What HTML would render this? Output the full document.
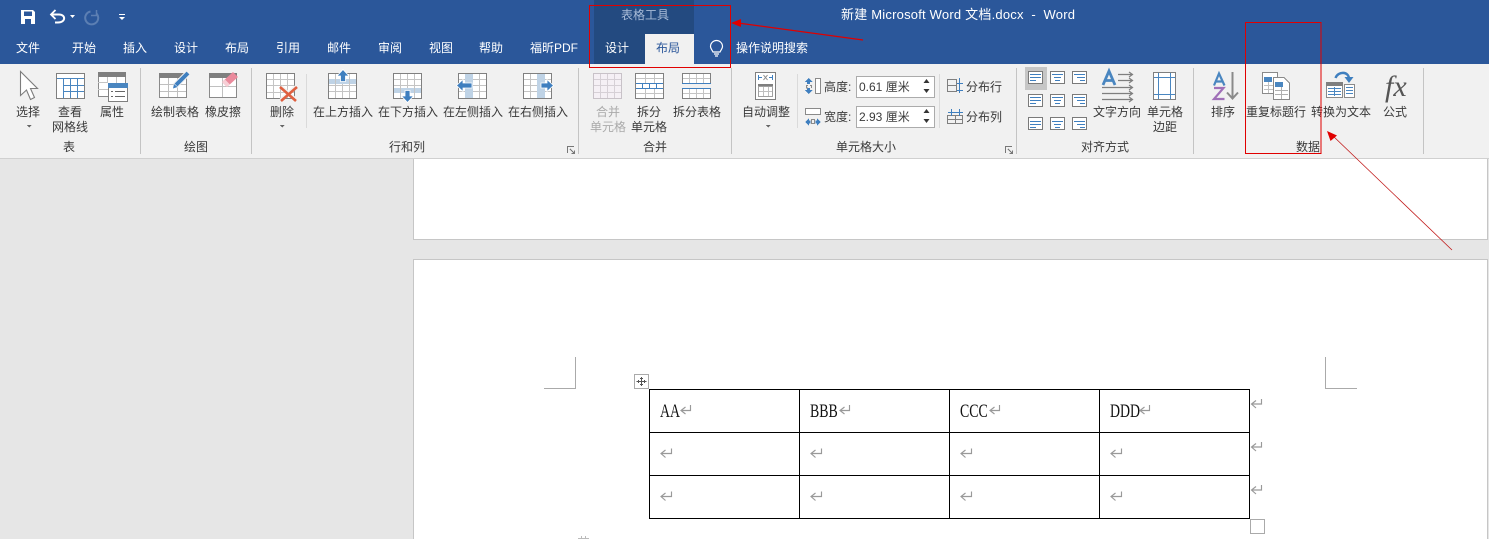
<!DOCTYPE html>
<html lang="zh-CN">
<head>
<meta charset="utf-8">
<title>Word</title>
<style>
html,body{margin:0;padding:0;background:#e6e6e6;width:1489px;height:539px;overflow:hidden}
body{position:relative;font-family:"Liberation Sans","Noto Sans CJK SC",sans-serif;font-size:12px;color:#3a3a3a}
.b{position:absolute}
.t{position:absolute;white-space:nowrap;line-height:16px;transform:translateX(-50%);text-align:center}
.l{position:absolute;white-space:nowrap;line-height:16px}
.w{color:#fff}
.d{font-family:"Liberation Serif",serif;font-size:19px;line-height:20px;color:#111;position:absolute;transform:scaleX(.73);transform-origin:0 0;white-space:nowrap}
svg{position:absolute;left:0;top:0}
</style>
</head>
<body>
<div class="b" style="left:0;top:0;width:1489px;height:64px;background:#2b579a"></div>
<div class="b" style="left:594px;top:0;width:100px;height:64px;background:#234a80"></div>
<div class="b" style="left:0;top:64px;width:1489px;height:94px;background:#f1f1f1"></div>
<div class="b" style="left:0;top:158px;width:1489px;height:1px;background:#d0d0d0"></div>
<div class="b" style="left:645px;top:34px;width:49px;height:30px;background:#f1f1f1"></div>
<div class="b" style="left:413px;top:159px;width:1073px;height:80px;background:#fff;border:1px solid #c6c6c6;border-top:0"></div>
<div class="b" style="left:413px;top:259px;width:1073px;height:280px;background:#fff;border:1px solid #c6c6c6;border-bottom:0"></div>
<div class="b" style="left:1025px;top:67px;width:22px;height:23px;background:#c6c6c6"></div>
<div class="b" style="left:856px;top:76px;width:77px;height:20px;background:#fff;border:1px solid #ababab"></div>
<div class="b" style="left:856px;top:106px;width:77px;height:20px;background:#fff;border:1px solid #ababab"></div>

<!-- tab labels -->
<span class="t w" style="left:28px;top:40px">文件</span>
<span class="t w" style="left:84px;top:40px">开始</span>
<span class="t w" style="left:135px;top:40px">插入</span>
<span class="t w" style="left:186px;top:40px">设计</span>
<span class="t w" style="left:237px;top:40px">布局</span>
<span class="t w" style="left:288px;top:40px">引用</span>
<span class="t w" style="left:339px;top:40px">邮件</span>
<span class="t w" style="left:390px;top:40px">审阅</span>
<span class="t w" style="left:441px;top:40px">视图</span>
<span class="t w" style="left:491px;top:40px">帮助</span>
<span class="t w" style="left:554px;top:40px">福昕PDF</span>
<span class="t w" style="left:617px;top:40px">设计</span>
<span class="t" style="left:668px;top:40px;color:#2b579a">布局</span>
<span class="t w" style="left:772px;top:40px">操作说明搜索</span>
<span class="t" style="left:645px;top:7px;color:#a9bcd8">表格工具</span>
<span class="l w" style="left:841px;top:7px;font-size:13px;letter-spacing:.21px;white-space:pre">新建 Microsoft Word 文档.docx  -  Word</span>

<!-- ribbon labels -->
<span class="t" style="left:28px;top:104px">选择</span>
<span class="t" style="left:70px;top:104px">查看</span>
<span class="t" style="left:70px;top:119px">网格线</span>
<span class="t" style="left:112px;top:104px">属性</span>
<span class="t" style="left:175px;top:104px">绘制表格</span>
<span class="t" style="left:223px;top:104px">橡皮擦</span>
<span class="t" style="left:282px;top:104px">删除</span>
<span class="t" style="left:343px;top:104px">在上方插入</span>
<span class="t" style="left:408px;top:104px">在下方插入</span>
<span class="t" style="left:473px;top:104px">在左侧插入</span>
<span class="t" style="left:538px;top:104px">在右侧插入</span>
<span class="t" style="left:608px;top:104px;color:#aaa">合并</span>
<span class="t" style="left:608px;top:119px;color:#aaa">单元格</span>
<span class="t" style="left:649px;top:104px">拆分</span>
<span class="t" style="left:649px;top:119px">单元格</span>
<span class="t" style="left:697px;top:104px">拆分表格</span>
<span class="t" style="left:766px;top:104px">自动调整</span>
<span class="l" style="left:824px;top:79px">高度:</span>
<span class="l" style="left:824px;top:109px">宽度:</span>
<span class="l" style="left:859px;top:79px;white-space:pre">0.61 厘米</span>
<span class="l" style="left:859px;top:109px;white-space:pre">2.93 厘米</span>
<span class="l" style="left:966px;top:79px">分布行</span>
<span class="l" style="left:966px;top:109px">分布列</span>
<span class="t" style="left:1117px;top:104px">文字方向</span>
<span class="t" style="left:1165px;top:104px">单元格</span>
<span class="t" style="left:1165px;top:119px">边距</span>
<span class="t" style="left:1223px;top:104px">排序</span>
<span class="t" style="left:1276px;top:104px">重复标题行</span>
<span class="t" style="left:1341px;top:104px">转换为文本</span>
<span class="t" style="left:1395px;top:104px">公式</span>
<span class="l" style="left:1385px;top:75px;font-family:'Liberation Serif',serif;font-style:italic;font-size:30px;line-height:24px;color:#555">fx</span>

<!-- group labels -->
<span class="t" style="left:69px;top:139px">表</span>
<span class="t" style="left:196px;top:139px">绘图</span>
<span class="t" style="left:407px;top:139px">行和列</span>
<span class="t" style="left:655px;top:139px">合并</span>
<span class="t" style="left:866px;top:139px">单元格大小</span>
<span class="t" style="left:1105px;top:139px">对齐方式</span>
<span class="t" style="left:1308px;top:139px">数据</span>

<!-- document text -->
<span class="d" style="left:660px;top:402px">AA</span>
<span class="d" style="left:810px;top:402px">BBB</span>
<span class="d" style="left:960px;top:402px">CCC</span>
<span class="d" style="left:1110px;top:402px">DDD</span>

<svg width="1489" height="539" viewBox="0 0 1489 539" fill="none" shape-rendering="crispEdges">
<!-- group separators -->
<path stroke="#c4c4c4" d="M140.500 68V154M251.500 68V154M578.500 68V154M731.500 68V154M1016.500 68V154M1193.500 68V154M1423.500 68V154"/>
<path stroke="#dadada" d="M306.500 74V128M797.500 74V128M939.500 74V128"/>

<!-- QAT -->
<g shape-rendering="auto">
<path fill="#fff" fill-rule="evenodd" d="M21 10H33L35 12V24H21ZM24 11.500V16H32V11.500ZM25 19V24H31V19Z"/>
<path stroke="#fff" stroke-width="2" d="M52 14.500H59C66 14.500 66 22.500 58 22.500H55"/>
<path stroke="#fff" stroke-width="1.800" d="M55.500 10L51 14.500L55.500 19"/>
<path fill="#fff" d="M70 15H75L72.500 18Z"/>
<path stroke="#5c7fb3" stroke-width="2" d="M96.500 13.500A6.500 6.500 0 1 1 90.500 11.500"/>
<path stroke="#5c7fb3" stroke-width="1.500" d="M96.500 10V15.500H91"/>
<path fill="#fff" d="M119 17H125L122 20Z"/>
<path stroke="#fff" d="M119 14.500H125"/>
<!-- bulb -->
<path stroke="#fff" stroke-width="1.200" d="M713.500 52C712 49 711 48.500 711 46.500A6 6 0 0 1 723 46.500C723 48.500 722 49 720.500 52ZM714.500 54H719.500M715.500 56H718.500" transform="translate(-.5 0)"/>
</g>

<!-- select arrow -->
<path shape-rendering="auto" fill="#fff" stroke="#7d7d7d" stroke-width="1.100" d="M20.500 71.500L37.500 88.500H30.500L34.500 97.500L30.500 99.500L26.500 90L20.500 95.500Z"/>
<path fill="#666" d="M26.500 125H31.500L29 127.500Z"/>

<!-- view gridlines -->
<rect x="56.500" y="73.500" width="28" height="25" fill="#fff" stroke="#7f7f7f"/>
<path stroke="#4a86c0" d="M57 78.500H84M63.500 79V98M70.500 79V98M77.500 79V98M63 85.500H84M63 91.500H84"/>

<!-- properties -->
<rect x="98.500" y="72.500" width="27" height="24" fill="#fff" stroke="#8a8a8a"/>
<rect x="98" y="72" width="28" height="5" fill="#7f7f7f"/>
<path stroke="#c4c4c4" d="M98 82.500H108M98 89.500H108M107.500 77V83M116.500 77V83"/>
<rect x="108.500" y="83.500" width="19" height="18" fill="#fff" stroke="#7f7f7f"/>
<rect x="108" y="83" width="20" height="5" fill="#4a86c0"/>
<path stroke="#666" d="M111 91.500H113M115 91.500H125M111 96.500H113M115 96.500H125"/>

<!-- draw table -->
<rect x="159.500" y="73.500" width="27" height="24" fill="#fff" stroke="#8a8a8a"/>
<rect x="159" y="73" width="28" height="5" fill="#7f7f7f"/>
<path stroke="#c0c0c0" d="M160 84.500H186M160 91.500H186M168.500 78V97M177.500 78V97"/>
<path shape-rendering="auto" stroke="#f1f1f1" stroke-width="6" d="M175 86L189 72"/>
<path shape-rendering="auto" stroke="#3f7fbf" stroke-width="4" d="M176 85L188 73"/>
<path shape-rendering="auto" fill="#3f7fbf" d="M173 88.500L174 84L177.500 87Z"/>

<!-- eraser -->
<rect x="209.500" y="73.500" width="27" height="24" fill="#fff" stroke="#8a8a8a"/>
<rect x="209" y="73" width="28" height="5" fill="#7f7f7f"/>
<path stroke="#c0c0c0" d="M210 86.500H236M222.500 78V97"/>
<path shape-rendering="auto" fill="#ea8a9c" d="M222 82L233 72L238 77L227 87Z"/>
<path shape-rendering="auto" fill="#f7cfd6" d="M222 82L225 79.500L230 84.500L227 87Z"/>

<!-- delete -->
<rect x="266.500" y="73.500" width="28" height="25" fill="#fff" stroke="#808080"/>
<path stroke="#c4c4c4" d="M267 79.500H294M267 85.500H294M267 92.500H294M273.500 74V98M280.500 74V98M287.500 74V98"/>
<path shape-rendering="auto" stroke="#f1f1f1" stroke-width="4" d="M281 87L296 100M296 87L281 100"/>
<path shape-rendering="auto" stroke="#df5f3f" stroke-width="2.600" d="M280 87L296 101M297 87L281 101"/>
<path fill="#666" d="M279.500 125H284.500L282 127.500Z"/>

<!-- insert above -->
<rect x="328.500" y="73.500" width="28" height="25" fill="#fff" stroke="#808080"/>
<rect x="329" y="79" width="27" height="5" fill="#bfd3e6"/>
<path stroke="#c4c4c4" d="M329 85.500H356M329 91.500H356M335.500 74V98M342.500 84V98M349.500 74V98"/>
<path shape-rendering="auto" fill="#3f7fbf" stroke="#fff" stroke-width=".8" d="M343 69.500L349 76H345.500V81.500H340.500V76H337Z"/>

<!-- insert below -->
<rect x="393.500" y="73.500" width="28" height="25" fill="#fff" stroke="#808080"/>
<rect x="394" y="88" width="27" height="5" fill="#bfd3e6"/>
<path stroke="#c4c4c4" d="M394 79.500H421M394 85.500H421M400.500 74V98M407.500 74V88M414.500 74V98"/>
<path shape-rendering="auto" fill="#3f7fbf" stroke="#fff" stroke-width=".8" d="M405 90.500H410V96H413.500L407.500 102.500L401.500 96H405Z"/>

<!-- insert left -->
<rect x="458.500" y="73.500" width="28" height="25" fill="#fff" stroke="#808080"/>
<rect x="465" y="74" width="8" height="24" fill="#bfd3e6"/>
<path stroke="#c4c4c4" d="M473 79.500H486M473 85.500H486M473 91.500H486M459 79.500H465M459 91.500H465M479.500 74V98"/>
<path shape-rendering="auto" fill="#3f7fbf" stroke="#fff" stroke-width=".8" d="M456.500 85.500L463 79.500V83H472V88H463V91.500Z"/>

<!-- insert right -->
<rect x="523.500" y="73.500" width="28" height="25" fill="#fff" stroke="#808080"/>
<rect x="537" y="74" width="8" height="24" fill="#bfd3e6"/>
<path stroke="#c4c4c4" d="M524 79.500H537M524 85.500H537M524 91.500H537M545 79.500H551M545 91.500H551M530.500 74V98"/>
<path shape-rendering="auto" fill="#3f7fbf" stroke="#fff" stroke-width=".8" d="M553.500 85.500L547 79.500V83H541V88H547V91.500Z"/>

<!-- merge -->
<rect x="593.500" y="73.500" width="28" height="25" fill="#f5f0f5" stroke="#c8c2c8"/>
<path stroke="#d6d0d6" d="M594 79.500H621M594 85.500H621M594 92.500H621M600.500 74V98M607.500 74V98M614.500 74V98"/>

<!-- split cell -->
<rect x="635.500" y="73.500" width="28" height="25" fill="#fff" stroke="#808080"/>
<path stroke="#c4c4c4" d="M636 78.500H663M636 93.500H663M645.500 74V83M654.500 74V83M645.500 89V98M654.500 89V98"/>
<path stroke="#3f7fbf" d="M636 83.500H663M636 88.500H663M642.500 84V88M649.500 84V88M656.500 84V88"/>

<!-- split table -->
<rect x="682.500" y="73.500" width="28" height="10" fill="#fff" stroke="#808080"/>
<rect x="682.500" y="88.500" width="28" height="10" fill="#fff" stroke="#808080"/>
<path stroke="#c4c4c4" d="M683 78.500H710M683 93.500H710M689.500 74V83M696.500 74V83M703.500 74V83M689.500 89V98M696.500 89V98M703.500 89V98"/>
<path stroke="#3f7fbf" d="M682 83.500H711M682 88.500H711"/>

<!-- autofit -->
<rect x="755.500" y="72.500" width="20" height="27" fill="#fff" stroke="#7f7f7f"/>
<path stroke="#3f7fbf" d="M758.500 75V80M772.500 75V80M758.500 77.500H762M769 77.500H772.500"/>
<path shape-rendering="auto" stroke="#8a8a8a" d="M763.500 75L767.500 80M767.500 75L763.500 80"/>
<rect x="758" y="84" width="15" height="3" fill="#7f7f7f"/>
<rect x="758.500" y="86.500" width="14" height="10" fill="#fff" stroke="#a0a0a0"/>
<path stroke="#c0c0c0" d="M759 91.500H772M763.500 87V96M768.500 87V96"/>
<path fill="#666" d="M765.500 125H770.500L768 127.500Z"/>

<!-- height / width icons -->
<rect x="815.500" y="78.500" width="5" height="15" fill="#fff" stroke="#8a8a8a"/>
<path fill="#3f7fbf" d="M808.500 78L812.500 82H810V84H807V82H804.500ZM808.500 94L812.500 90H810V88H807V90H804.500Z"/>
<path stroke="#8a8a8a" d="M806 85.500H808M810 85.500H811.500M806 88H808M806.500 85V88M811.500 85V88"/>
<rect x="805.500" y="108.500" width="15" height="6" fill="#fff" stroke="#8a8a8a"/>
<path fill="#3f7fbf" d="M805 122L809 118.500V120.500H810.500V123.500H809V125.500ZM821 122L817 118.500V120.500H815.500V123.500H817V125.500Z"/>
<rect x="811.500" y="119.500" width="3" height="4" fill="none" stroke="#8a8a8a"/>

<!-- spinners -->
<path shape-rendering="auto" fill="#333" d="M926.500 79L929.500 83H923.500ZM926.500 93L929.500 89H923.500ZM926.500 109L929.500 113H923.500ZM926.500 123L929.500 119H923.500Z"/>

<!-- distribute -->
<path stroke="#7f7f7f" d="M947.500 79.500H956.500V91.500H947.500ZM947 85.500H957"/>
<path stroke="#3f7fbf" d="M959.500 78V93M957 83.500H963M957 90.500H963"/>
<path stroke="#7f7f7f" d="M947.500 115.500H962.500V123.500H947.500ZM955.500 115V124M947 119.500H963"/>
<path stroke="#3f7fbf" d="M951.500 109V116M959.500 109V116M948 112.500H963"/>

<!-- dialog launchers -->
<path stroke="#777" d="M567.500 146.500H574M567.500 146V153M570 149L574.500 153.500M574.500 150.500V153.500H571.500"/>
<path stroke="#777" d="M1005.500 146.500H1012M1005.500 146V153M1008 149L1012.500 153.500M1012.500 150.500V153.500H1009.500"/>

<!-- align grid -->
<g fill="#fff" stroke="#7a7a7a">
<rect x="1028.500" y="71.500" width="14" height="12"/><rect x="1050.500" y="71.500" width="14" height="12"/><rect x="1072.500" y="71.500" width="14" height="12"/>
<rect x="1028.500" y="94.500" width="14" height="12"/><rect x="1050.500" y="94.500" width="14" height="12"/><rect x="1072.500" y="94.500" width="14" height="12"/>
<rect x="1028.500" y="117.500" width="14" height="12"/><rect x="1050.500" y="117.500" width="14" height="12"/><rect x="1072.500" y="117.500" width="14" height="12"/>
</g>
<path stroke="#3f7fbf" d="M1030 74.500H1041M1030 77.500H1041M1030 80.500H1036
M1052 74.500H1063M1054 77.500H1061M1055 80.500H1060
M1074 74.500H1085M1077 77.500H1085M1080 80.500H1085
M1030 97.500H1041M1030 100.500H1041M1030 103.500H1036
M1052 97.500H1063M1054 100.500H1061M1055 103.500H1060
M1074 97.500H1085M1077 100.500H1085M1080 103.500H1085
M1030 121.500H1041M1030 124.500H1041M1030 127.500H1036
M1052 121.500H1063M1054 124.500H1061M1055 127.500H1060
M1074 121.500H1085M1077 124.500H1085M1080 127.500H1085"/>

<!-- text direction -->
<g shape-rendering="auto">
<path stroke="#4a86c0" stroke-width="2.800" d="M1103 85L1109 71L1115 85M1105 80.500H1113"/>
<path stroke="#7f7f7f" stroke-width="1.200" d="M1118 74.500H1132M1118 80.500H1132M1102 87.500H1132M1102 93.500H1132M1102 99.500H1132M1129 72L1132.500 74.500L1129 77M1129 78L1132.500 80.500L1129 83M1129 85L1132.500 87.500L1129 90M1129 91L1132.500 93.500L1129 96M1129 97L1132.500 99.500L1129 102"/>
</g>

<!-- cell margins -->
<rect x="1153.500" y="72.500" width="22" height="27" fill="#fff" stroke="#7f7f7f"/>
<path stroke="#4a86c0" d="M1158.500 73V99M1170.500 73V99M1154 77.500H1175M1154 94.500H1175"/>

<!-- sort -->
<g shape-rendering="auto">
<path stroke="#4a86c0" stroke-width="2.200" d="M1214 85.500L1219 73.500L1224.500 85.500M1215.500 81.500H1223"/>
<path stroke="#a070b8" stroke-width="2.200" d="M1214 88H1223.500L1214 99H1224.500"/>
<path stroke="#8a8a8a" stroke-width="2" d="M1232.500 72V98M1227 92.500L1232.500 98.500L1238 92.500"/>
</g>

<!-- repeat header -->
<path fill="#fff" stroke="#8a8a8a" d="M1262.500 72.500H1277.500V93.500H1262.500Z"/>
<rect x="1264" y="77" width="8" height="5" fill="#4a86c0"/>
<path stroke="#c0c0c0" d="M1264 85.500H1273M1264 89.500H1273M1268.500 82V93"/>
<path fill="#fff" stroke="#8a8a8a" d="M1273.500 77.500H1284L1289.500 83V99.500H1273.500Z"/>
<rect x="1275" y="82" width="8" height="5" fill="#4a86c0"/>
<path stroke="#b0b0b0" d="M1275 90.500H1288M1275 94.500H1288M1281.500 87V99"/>

<!-- convert -->
<rect x="1326.500" y="82.500" width="16" height="15" fill="#fff" stroke="#8a8a8a"/>
<rect x="1326" y="82" width="17" height="4" fill="#7f7f7f"/>
<path stroke="#4a86c0" d="M1328 88.500H1341M1328 91.500H1341M1328 94.500H1341M1334.500 87V96"/>
<rect x="1344.500" y="84.500" width="10" height="13" fill="#fff" stroke="#8a8a8a"/>
<path stroke="#4a86c0" d="M1346 87.500H1353M1346 90.500H1353M1346 93.500H1353"/>
<g shape-rendering="auto">
<path stroke="#3f7fbf" stroke-width="2.400" d="M1335.500 78C1338 71 1349 71 1349 79"/>
<path fill="#3f7fbf" d="M1344.500 77H1353.500L1349 83Z"/>
</g>

<!-- document table -->
<path stroke="#000" d="M649.500 389.500H1249.500V518.500H649.500ZM799.500 389V519M949.500 389V519M1099.500 389V519M649 432.500H1250M649 475.500H1250"/>

<!-- move handle -->
<rect x="634.500" y="374.500" width="14" height="14" fill="#fff" stroke="#aaa"/>
<path stroke="#555" d="M641.500 377V386M636.500 381.500H646.500M640 378.500H643M640 384.500H643M638.500 380V383M644.500 380V383"/>
<!-- resize handle -->
<rect x="1250.500" y="519.500" width="14" height="14" fill="#fff" stroke="#aaa"/>
<!-- crop marks -->
<path stroke="#aaa" d="M544 388.500H575.500V357M1325.500 357V388.500H1357"/>
<path stroke="#bbb" d="M581.500 536V539M585.500 536V539M578 538.500H589"/>

<!-- return marks -->
<g stroke="#999" shape-rendering="auto" stroke-width="1.150">
<path d="M690.500 405V410.500H681.500M685.500 407L681 410.500L685.500 414"/>
<path d="M849.500 405V410.500H840.500M844.500 407L840 410.500L844.500 414"/>
<path d="M999.500 405V410.500H990.500M994.500 407L990 410.500L994.500 414"/>
<path d="M1149.500 405V410.500H1140.500M1144.500 407L1140 410.500L1144.500 414"/>
<path d="M671.500 448.500V453.500H661.500M665.500 450L661 453.500L665.500 457.500"/>
<path d="M821.500 448.500V453.500H811.500M815.500 450L811 453.500L815.500 457.500"/>
<path d="M971.500 448.500V453.500H961.500M965.500 450L961 453.500L965.500 457.500"/>
<path d="M1121.500 448.500V453.500H1111.500M1115.500 450L1111 453.500L1115.500 457.500"/>
<path d="M671.500 491.500V496.500H661.500M665.500 493L661 496.500L665.500 500.500"/>
<path d="M821.500 491.500V496.500H811.500M815.500 493L811 496.500L815.500 500.500"/>
<path d="M971.500 491.500V496.500H961.500M965.500 493L961 496.500L965.500 500.500"/>
<path d="M1121.500 491.500V496.500H1111.500M1115.500 493L1111 496.500L1115.500 500.500"/>
<path d="M1261.500 399V404H1252M1256 400.500L1251.500 404L1256 408"/>
<path d="M1261.500 442V447H1252M1256 443.500L1251.500 447L1256 451"/>
<path d="M1261.500 485V490H1252M1256 486.500L1251.500 490L1256 494"/>
</g>

<!-- annotations -->
<rect x="589.500" y="5.500" width="141" height="62" stroke="#e00000"/>
<rect x="1245.500" y="22.500" width="75.500" height="131" stroke="#e00000"/>
<g shape-rendering="auto">
<path stroke="#e00000" stroke-width="1.200" d="M863 40L738 23"/>
<path fill="#e00000" d="M731 23L741 19L741 27Z"/>
<path stroke="#c01818" stroke-width=".8" d="M1452 250L1332 135"/>
<path fill="#e00000" d="M1327 131L1337 135.500L1330.500 141Z"/>
</g>
</svg>
</body>
</html>
